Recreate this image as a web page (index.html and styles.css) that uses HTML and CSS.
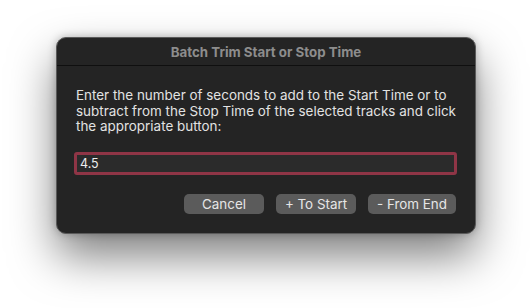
FILE: index.html
```html
<!DOCTYPE html>
<html>
<head>
<meta charset="utf-8">
<link rel="stylesheet" href="styles.css">
</head>
<body>
<div class="stage">
  <div class="window">
    <div class="titlebar">Batch Trim Start or Stop Time</div>
    <div class="content">
      <p class="message">Enter the number of seconds to add to the Start Time or to subtract from the Stop Time of the selected tracks and click the appropriate button:</p>
      <div class="field">4.5</div>
      <div class="buttons">
        <div class="btn btn-cancel">Cancel</div>
        <div class="btn btn-start">+ To Start</div>
        <div class="btn btn-end">- From End</div>
      </div>
    </div>
  </div>
</div>
</body>
</html>
```

FILE: styles.css
```css
html, body {
  margin: 0;
  padding: 0;
  background: #ffffff;
  width: 532px;
  height: 308px;
  overflow: hidden;
  font-family: Inter, "Liberation Sans", sans-serif;
}
.stage {
  padding: 37px 0 0 56px;
}
.window {
  width: 418px;
  height: 195px;
  background: #242424;
  border: 1px solid #5a5a5a;
  border-radius: 10px;
  box-shadow: 0 22px 45px rgba(0,0,0,0.5), 0 0 8px rgba(0,0,0,0.25);
  display: flex;
  flex-direction: column;
  overflow: hidden;
}
.titlebar {
  height: 28px;
  border-bottom: 1px solid #0f0f0f;
  box-sizing: border-box;
  display: flex;
  align-items: center;
  justify-content: center;
  color: #8d8d8d;
  font-weight: 700;
  font-size: 13.3px;
  padding-top: 1px;
}
.content {
  padding: 22px 0 0 0;
}
.message {
  margin: 0 0 0 19px;
  color: #e2e2e2;
  font-size: 13.45px;
  line-height: 15.5px;
}
.field {
  margin: 17px 0 0 17px;
  height: 23px;
  box-sizing: border-box;
  border: 3px solid #8f3546;
  border-radius: 3px;
  background: #2b2b2b;
  color: #ededed;
  font-size: 12.5px;
  line-height: 17px;
  padding-left: 3px;
  width: 383px;
}
.buttons {
  margin-top: 19px;
  display: flex;
  justify-content: flex-end;
  gap: 12px;
  padding-right: 19px;
}
.btn {
  height: 20px;
  background: #5b5b5b;
  border-radius: 5px;
  color: #e6e6e6;
  font-size: 13.4px;
  display: flex;
  align-items: center;
  justify-content: center;
}
.btn-cancel, .btn-start { width: 80px; }
.btn-end { width: 88px; }
```
